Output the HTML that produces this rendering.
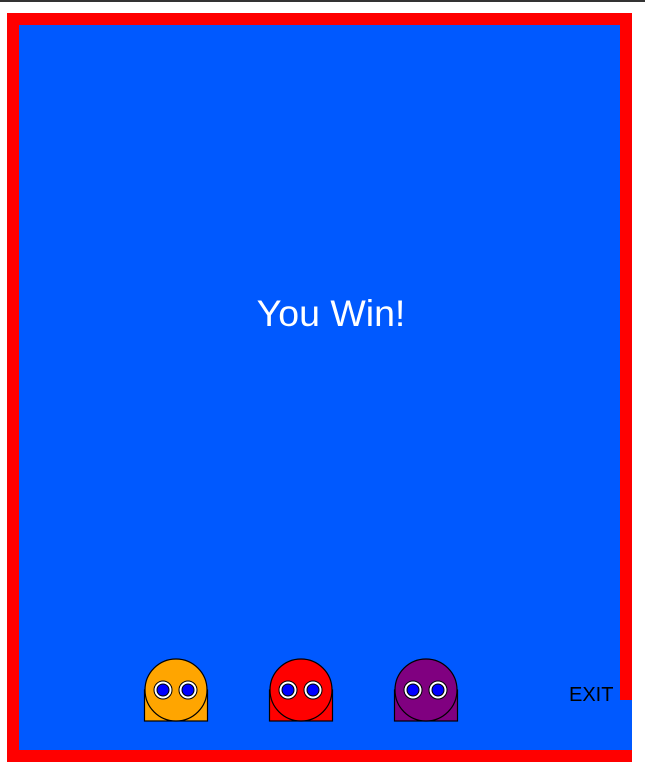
<!DOCTYPE html>
<html><head><meta charset="utf-8"><style>
html,body{margin:0;padding:0;background:#fff;width:645px;height:773px;overflow:hidden}
svg{display:block}
</style></head><body>
<svg width="645" height="773" xmlns="http://www.w3.org/2000/svg">
<rect x="0" y="0" width="645" height="2" fill="#333"/>
<rect x="7" y="13" width="625" height="749" fill="#ff0000"/>
<rect x="19" y="25" width="601" height="725" fill="#0059ff"/>
<rect x="619" y="700" width="13" height="50" fill="#0059ff"/>
<text x="331" y="326" font-family="Liberation Sans, sans-serif" font-size="37.5" fill="#fff" text-anchor="middle">You Win!</text>
<text x="569" y="701" font-family="Liberation Sans, sans-serif" font-size="20" fill="#000">EXIT</text>
<g stroke="#000" stroke-width="1.2">
 <g fill="#ffa500"><rect x="144.5" y="690" width="63" height="31"/><circle cx="176" cy="690" r="31"/></g>
 <g fill="#ff0000"><rect x="269.5" y="690" width="63" height="31"/><circle cx="301" cy="690" r="31"/></g>
 <g fill="#800080"><rect x="394.5" y="690" width="63" height="31"/><circle cx="426" cy="690" r="31"/></g>
</g>
<g>
 <g fill="#fff" stroke="#000" stroke-width="1">
  <circle cx="163" cy="690" r="9"/><circle cx="188" cy="690" r="9"/>
  <circle cx="288" cy="690" r="9"/><circle cx="313" cy="690" r="9"/>
  <circle cx="413" cy="690" r="9"/><circle cx="438" cy="690" r="9"/>
 </g>
 <g fill="#0000ff" stroke="#000" stroke-width="1">
  <circle cx="163" cy="690" r="6"/><circle cx="188" cy="690" r="6"/>
  <circle cx="288" cy="690" r="6"/><circle cx="313" cy="690" r="6"/>
  <circle cx="413" cy="690" r="6"/><circle cx="438" cy="690" r="6"/>
 </g>
</g>
</svg>
</body></html>
